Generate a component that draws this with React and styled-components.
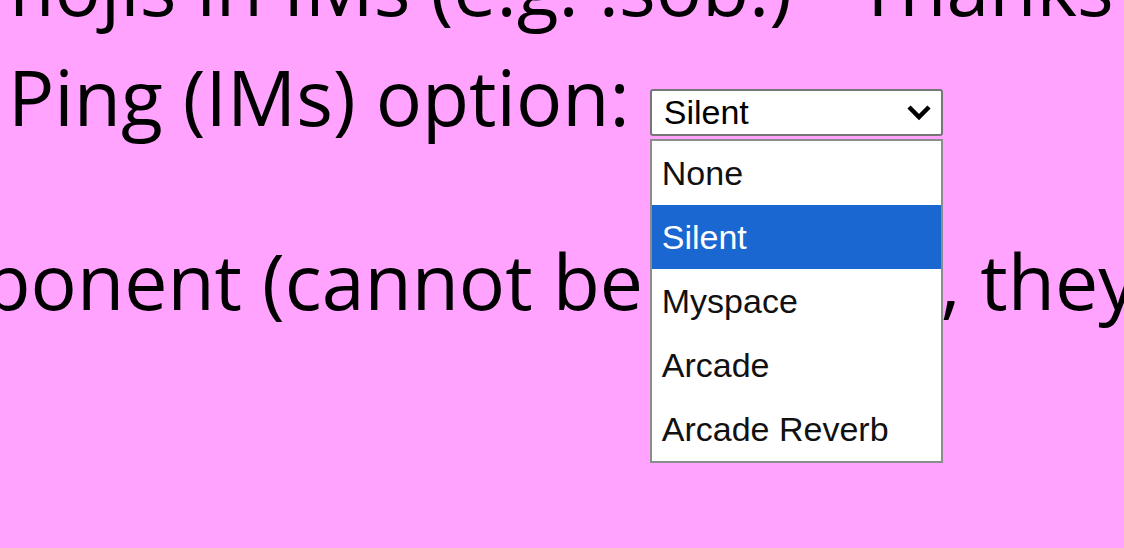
import React from 'react';
import styled, { createGlobalStyle } from 'styled-components';

const GlobalStyle = createGlobalStyle`
	html, body {
		margin: 0;
		padding: 0;
		background: #ffa3fe;
	}
`;

const Page = styled.div`
	width: 1124px;
	height: 548px;
	overflow: hidden;
	background: #ffa3fe;
	color: #000;
	font-family: 'Open Sans', 'Noto Sans', sans-serif;
	font-size: 77px;
	line-height: 110px;
`;

const Line = styled.div`
	white-space: nowrap;
	margin-left: ${(p) => p.$shift || 0}px;
	margin-top: ${(p) => p.$top || 0}px;
`;

const SelectWrap = styled.span`
	position: relative;
	display: inline-block;
	vertical-align: 2px;
	margin-left: 20px;
	line-height: normal;
`;

const SelectBox = styled.span`
	box-sizing: border-box;
	display: flex;
	align-items: center;
	justify-content: space-between;
	width: 293px;
	height: 47px;
	padding: 0 9px 0 12px;
	background: #fff;
	border: 2px solid #767676;
	border-radius: 3px;
	font-family: 'Liberation Sans', Arial, sans-serif;
	font-size: 34px;
	color: #000;
`;

const Chevron = () => (
	<svg width="26" height="18" viewBox="0 0 26 18">
		<path d="M3 3 L13 13 L23 3" fill="none" stroke="#000" strokeWidth="4.5" />
	</svg>
);

const List = styled.ul`
	position: absolute;
	top: 50px;
	left: 0;
	box-sizing: border-box;
	width: 293px;
	margin: 0;
	padding: 0;
	list-style: none;
	background: #fff;
	border: 2px solid #8c8c8c;
	font-family: 'Liberation Sans', Arial, sans-serif;
	font-size: 34px;
	z-index: 2;
`;

const Option = styled.li`
	height: 64px;
	display: flex;
	align-items: center;
	padding-left: 10px;
	background: ${(p) => (p.$selected ? '#1a67d2' : '#fff')};
	color: ${(p) => (p.$selected ? '#fff' : '#111')};
`;

const options = ['None', 'Silent', 'Myspace', 'Arcade', 'Arcade Reverb'];

export default function App() {
	const selected = 'Silent';
	return (
		<>
			<GlobalStyle />
			<Page>
				<Line $shift={-60} $top={-68}>
					emojis in IMs (e.g. :sob:) - Thanks to everyone
				</Line>
				<Line $shift={8}>
					Ping (IMs) option:
					<SelectWrap>
						<SelectBox>
							{selected}
							<Chevron />
						</SelectBox>
						<List>
							{options.map((o) => (
								<Option key={o} $selected={o === selected}>
									{o}
								</Option>
							))}
						</List>
					</SelectWrap>
				</Line>
				<Line $shift={-171} $top={74}>
					component (cannot be altered), they are
				</Line>
			</Page>
		</>
	);
}
